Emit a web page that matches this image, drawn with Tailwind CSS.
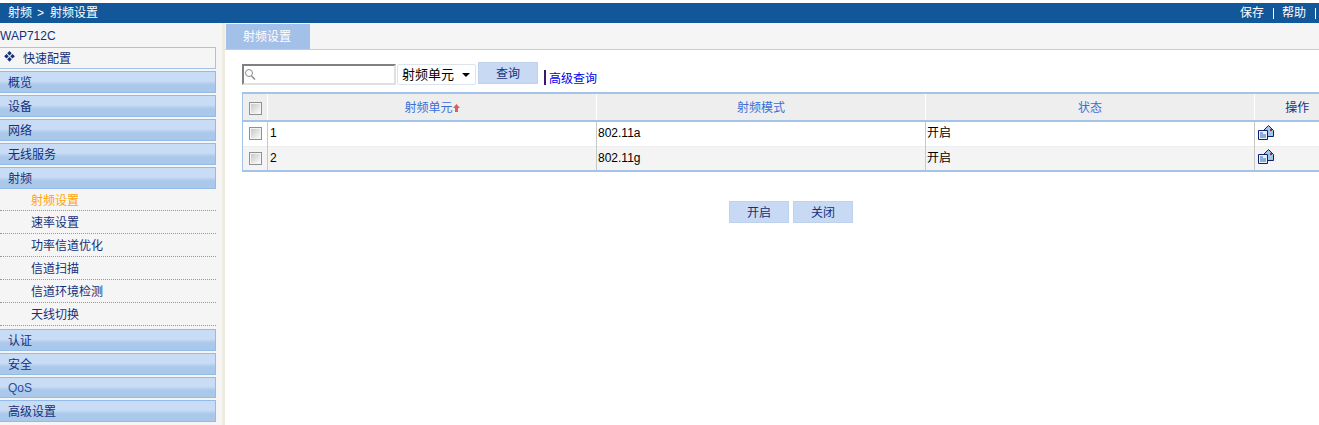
<!DOCTYPE html>
<html lang="zh-CN">
<head>
  <meta charset="UTF-8" />
  <title>射频设置</title>
  <script src="https://cdn.jsdelivr.net/npm/@tailwindcss/browser@4"></script>
</head>
<body class="h-[425px] w-[1319px] overflow-hidden bg-white text-[12px] leading-none text-[#14307a] font-['Liberation_Sans','Noto_Sans_CJK_SC',sans-serif]">
  <!-- 顶部导航 -->
  <div class="mt-[3px] flex h-5 items-center justify-between bg-[#125799] pl-2 text-white">
    <div class="flex items-center">
      <span>射频</span><span class="ml-[5px] mr-[6px]">&gt;</span><span>射频设置</span>
    </div>
    <div class="flex items-center">
      <span>保存</span>
      <span class="ml-[9px] mr-[8px] h-[11px] w-px bg-white"></span>
      <span>帮助</span>
      <span class="ml-[9px] mr-[3px] h-[11px] w-px bg-white"></span>
    </div>
  </div>

  <div class="flex h-[402px]">
    <!-- 左侧菜单 -->
    <div class="flex w-[222px] shrink-0 flex-col bg-[#f5f5f5] pr-[6px]">
      <div class="flex h-6 items-center pt-px">WAP712C</div>
      <div class="flex h-[22px] items-center border border-l-0 border-[#a3c3e8] pl-1">
        <svg class="mb-[3px] mr-2" width="11" height="11" viewBox="0 0 12 12"><path fill="#14307a" d="M6 0l2.500 2.500L6 5 3.500 2.500zM2.700 3.300l2.500 2.500-2.500 2.500L.2 5.800zM9.300 3.300l2.500 2.500-2.500 2.500-2.500-2.500zM6 6.600l2.500 2.500L6 11.600 3.500 9.100z"/></svg>
        <span class="pt-px">快速配置</span>
      </div>
      <div class="mt-[2px] flex flex-col gap-[2px]">
        <div class="flex h-[22px] items-center border border-l-0 border-[#92bbe8] bg-gradient-to-b from-[#c8dcf6] from-45% to-[#a9c8ea] to-65% pl-2 pt-px">概览</div>
        <div class="flex h-[22px] items-center border border-l-0 border-[#92bbe8] bg-gradient-to-b from-[#c8dcf6] from-45% to-[#a9c8ea] to-65% pl-2 pt-px">设备</div>
        <div class="flex h-[22px] items-center border border-l-0 border-[#92bbe8] bg-gradient-to-b from-[#c8dcf6] from-45% to-[#a9c8ea] to-65% pl-2 pt-px">网络</div>
        <div class="flex h-[22px] items-center border border-l-0 border-[#92bbe8] bg-gradient-to-b from-[#c8dcf6] from-45% to-[#a9c8ea] to-65% pl-2 pt-px">无线服务</div>
        <div class="flex h-[22px] items-center border border-l-0 border-[#92bbe8] bg-gradient-to-b from-[#c8dcf6] from-45% to-[#a9c8ea] to-65% pl-2 pt-px">射频</div>
      </div>
      <div class="flex flex-col">
        <div class="flex h-[22px] items-center border-b border-dotted border-[#999] pl-[31px] pt-[2px] text-[#ffa500]">射频设置</div>
        <div class="flex h-[23px] items-center border-b border-dotted border-[#999] pl-[31px] pt-[2px]">速率设置</div>
        <div class="flex h-[23px] items-center border-b border-dotted border-[#999] pl-[31px] pt-[2px]">功率信道优化</div>
        <div class="flex h-[23px] items-center border-b border-dotted border-[#999] pl-[31px] pt-[2px]">信道扫描</div>
        <div class="flex h-[23px] items-center border-b border-dotted border-[#999] pl-[31px] pt-[2px]">信道环境检测</div>
        <div class="flex h-[23px] items-center border-b border-dotted border-[#999] pl-[31px] pt-[2px]">天线切换</div>
      </div>
      <div class="mt-[3px] flex flex-col gap-[2px]">
        <div class="flex h-[22px] items-center border border-l-0 border-[#92bbe8] bg-gradient-to-b from-[#c8dcf6] from-45% to-[#a9c8ea] to-65% pl-2 pt-px">认证</div>
        <div class="flex h-[22px] items-center border border-l-0 border-[#92bbe8] bg-gradient-to-b from-[#c8dcf6] from-45% to-[#a9c8ea] to-65% pl-2 pt-px">安全</div>
        <div class="flex h-[21px] items-center border border-l-0 border-[#92bbe8] bg-gradient-to-b from-[#c8dcf6] from-45% to-[#a9c8ea] to-65% pl-2 pt-px text-[#2a4f9a]">QoS</div>
        <div class="flex h-[22px] items-center border border-l-0 border-[#92bbe8] bg-gradient-to-b from-[#c8dcf6] from-45% to-[#a9c8ea] to-65% pl-2 pt-px">高级设置</div>
      </div>
    </div>
    <div class="w-[3px] shrink-0 bg-[#efebde]"></div>

    <!-- 内容区 -->
    <div class="min-w-0 flex-1">
      <div class="flex h-[27px] border-b border-[#cccccc] bg-[#f5f5f5] pl-px pt-px">
        <div class="flex w-[84px] items-center justify-center pr-[2px] bg-[#a3c0e8] text-white">射频设置</div>
      </div>

      <div class="mt-3 flex items-start pl-[17px]">
        <div class="mt-[2px] flex h-[21px] w-[154px] items-center border-2 border-b-[#e0e0e0] border-l-[#808080] border-r-[#e0e0e0] border-t-[#808080] bg-white">
          <svg width="12" height="13" viewBox="0 0 12 13" fill="none" stroke="#8a8a8a"><circle cx="5" cy="5" r="3.500"/><path d="M7.500 8l3.500 3.500" stroke-width="1.500"/></svg>
        </div>
        <div class="relative ml-px mt-[2px] flex h-[21px] w-[79px] items-center rounded-[2px] border border-[#dde3ea] bg-white pl-1 text-[13px] text-black">
          射频单元
          <span class="absolute right-[5px] top-2 h-0 w-0 border-x-4 border-t-4 border-x-transparent border-t-black"></span>
        </div>
        <div class="ml-[2px] flex h-[22px] w-[60px] items-center justify-center border border-[#bed2ee] bg-[#c8d9f3] pt-[2px]">查询</div>
        <div class="ml-[6px] mt-2 h-[15px] w-[2px] bg-[#3a1a70]"></div>
        <div class="ml-[3px] mt-[10px] pt-px text-[#0000ee]">高级查询</div>
      </div>

      <table class="ml-[17px] mt-[7px] w-[1077px] table-fixed border-collapse">
        <colgroup><col class="w-[25px]" /><col class="w-[329px]" /><col class="w-[329px]" /><col class="w-[329px]" /><col class="w-[65px]" /></colgroup>
        <thead>
          <tr class="h-7 border-y-2 border-[#a3c3e8] bg-[#eeeeee] text-center text-[#3a6fd8]">
            <th class="border-l border-r border-l-[#a3c3e8] border-r-white pt-[2px] font-normal">
              <span class="mx-auto block h-[13px] w-[13px] border border-[#909090] bg-gradient-to-br from-[#c4c4c4] to-white shadow-[inset_0_0_0_1px_#f4f4f4]"></span>
            </th>
            <th class="border-r border-white pt-[2px] font-normal">
              <span class="inline-flex items-center">射频单元<svg class="mb-px" width="7" height="8" viewBox="0 0 7 8"><path fill="#d96060" d="M3.500 0L7 4H5v4H2V4H0z"/></svg></span>
            </th>
            <th class="border-r border-white pt-[2px] font-normal">射频模式</th>
            <th class="border-r border-white pt-[2px] font-normal">状态</th>
            <th class="pl-5 pt-[2px] font-normal text-[#14307a]">操作</th>
          </tr>
        </thead>
        <tbody class="text-black">
          <tr class="h-[25px] border-b border-[#eeeeee] bg-white">
            <td class="border-l border-r border-l-[#a3c3e8] border-r-[#c8c8c8]"><span class="mx-auto block h-[13px] w-[13px] border border-[#909090] bg-gradient-to-br from-[#c4c4c4] to-white shadow-[inset_0_0_0_1px_#f4f4f4]"></span></td>
            <td class="border-r border-[#c8c8c8] pb-[2px] pl-[2px]">1</td>
            <td class="border-r border-[#c8c8c8] pb-[2px] pl-px">802.11a</td>
            <td class="border-r border-[#c8c8c8] pb-[2px] pl-px">开启</td>
            <td class="pb-[3px] pl-[3px]">
              <svg class="block" width="16" height="15" viewBox="0 0 16 15"><path fill="#9cc8ec" stroke="#10206e" d="M5.500 5.500L10.500.5l5 5v6h-10z"/><path fill="#e4f2fc" stroke="#10206e" d="M.5 5.500h9v9h-9z"/><path stroke="#3a66b0" d="M2 8h3M2 10h6M2 12h6"/><path fill="#b02030" d="M12 4h2v2h-2z"/></svg>
            </td>
          </tr>
          <tr class="h-[25px] border-b-2 border-[#a3c3e8] bg-[#f4f4f4]">
            <td class="border-l border-r border-l-[#a3c3e8] border-r-[#c8c8c8]"><span class="mx-auto block h-[13px] w-[13px] border border-[#909090] bg-gradient-to-br from-[#c4c4c4] to-white shadow-[inset_0_0_0_1px_#f4f4f4]"></span></td>
            <td class="border-r border-[#c8c8c8] pl-[2px]">2</td>
            <td class="border-r border-[#c8c8c8] pl-px">802.11g</td>
            <td class="border-r border-[#c8c8c8] pl-px">开启</td>
            <td class="pb-[3px] pl-[3px]">
              <svg class="block" width="16" height="15" viewBox="0 0 16 15"><path fill="#9cc8ec" stroke="#10206e" d="M5.500 5.500L10.500.5l5 5v6h-10z"/><path fill="#e4f2fc" stroke="#10206e" d="M.5 5.500h9v9h-9z"/><path stroke="#3a66b0" d="M2 8h3M2 10h6M2 12h6"/><path fill="#b02030" d="M12 4h2v2h-2z"/></svg>
            </td>
          </tr>
        </tbody>
      </table>

      <div class="mt-[29px] flex justify-center gap-1 pl-[38px]">
        <div class="flex h-[22px] w-[60px] items-center justify-center border border-[#bed2ee] bg-[#c8d9f3] pt-px">开启</div>
        <div class="flex h-[22px] w-[60px] items-center justify-center border border-[#bed2ee] bg-[#c8d9f3] pt-px">关闭</div>
      </div>
    </div>
  </div>
</body>
</html>
